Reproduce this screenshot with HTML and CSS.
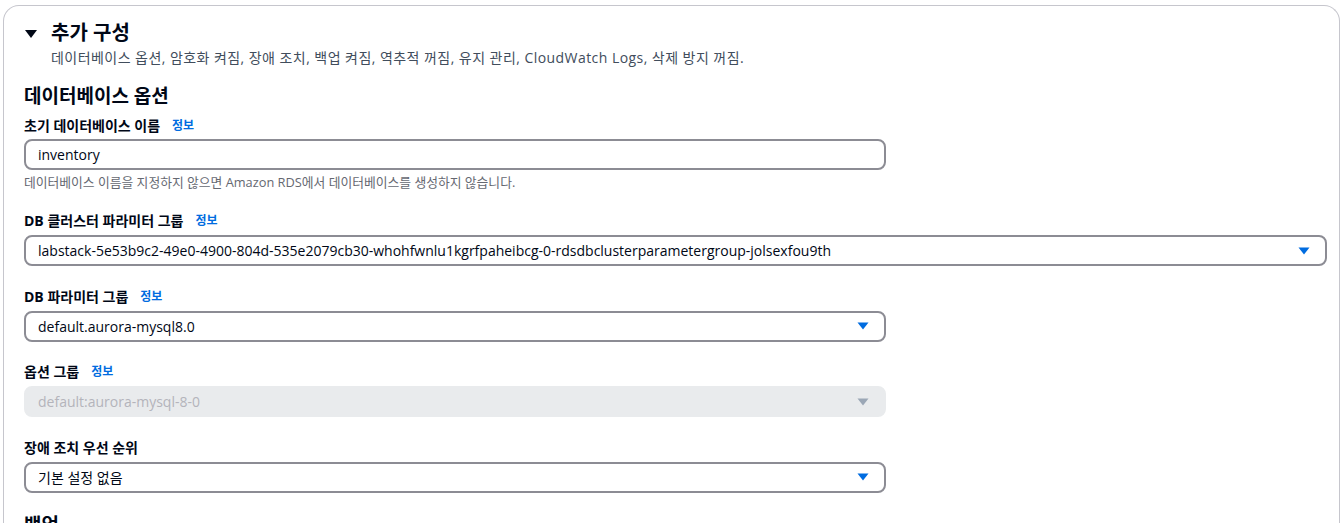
FILE: index.html
```html
<!DOCTYPE html>
<html lang="ko">
<head>
<meta charset="utf-8">
<link rel="stylesheet" href="styles.css">
</head>
<body>
<div class="page">
  <section class="card">
    <header class="exp-header">
      <span class="caret"><svg width="12" height="10" viewBox="0 0 12 10"><path d="M0 1h12L6 9z" fill="#000716"/></svg></span>
      <div>
        <h2 class="exp-title">추가 구성</h2>
        <p class="exp-desc">데이터베이스 옵션, 암호화 켜짐, 장애 조치, 백업 켜짐, 역추적 꺼짐, 유지 관리, CloudWatch Logs, 삭제 방지 꺼짐.</p>
      </div>
    </header>

    <h3 class="sec-title">데이터베이스 옵션</h3>

    <div class="field first">
      <div class="label">초기 데이터베이스 이름 <a class="info">정보</a></div>
      <div class="input narrow">inventory</div>
      <div class="hint">데이터베이스 이름을 지정하지 않으면 Amazon RDS에서 데이터베이스를 생성하지 않습니다.</div>
    </div>

    <div class="field">
      <div class="label">DB 클러스터 파라미터 그룹 <a class="info">정보</a></div>
      <div class="input select">
        <span>labstack-5e53b9c2-49e0-4900-804d-535e2079cb30-whohfwnlu1kgrfpaheibcg-0-rdsdbclusterparametergroup-jolsexfou9th</span>
        <svg class="arrow" width="12" height="8" viewBox="0 0 12 8"><path d="M0.5 0.5h11L6 7.5z" fill="#006ce0"/></svg>
      </div>
    </div>

    <div class="field">
      <div class="label">DB 파라미터 그룹 <a class="info">정보</a></div>
      <div class="input select narrow">
        <span>default.aurora-mysql8.0</span>
        <svg class="arrow" width="12" height="8" viewBox="0 0 12 8"><path d="M0.5 0.5h11L6 7.5z" fill="#006ce0"/></svg>
      </div>
    </div>

    <div class="field">
      <div class="label">옵션 그룹 <a class="info">정보</a></div>
      <div class="input select narrow disabled">
        <span>default:aurora-mysql-8-0</span>
        <svg class="arrow" width="12" height="8" viewBox="0 0 12 8"><path d="M0.5 0.5h11L6 7.5z" fill="#9ba7b6"/></svg>
      </div>
    </div>

    <div class="field">
      <div class="label">장애 조치 우선 순위</div>
      <div class="input select narrow">
        <span>기본 설정 없음</span>
        <svg class="arrow" width="12" height="8" viewBox="0 0 12 8"><path d="M0.5 0.5h11L6 7.5z" fill="#006ce0"/></svg>
      </div>
    </div>

    <h3 class="sec-title next">백업</h3>
  </section>
</div>
</body>
</html>
```

FILE: styles.css
```css
* { box-sizing: border-box; }
html, body { margin: 0; padding: 0; background: #fff; }
body {
  font-family: "Open Sans", "Noto Sans CJK KR", sans-serif;
  color: #000716;
  font-size: 14px;
  overflow: hidden;
  height: 523px;
}
.page { padding: 5px 3px 0 3px; }
.card {
  border: 1px solid #c6c6cd;
  border-bottom: none;
  border-radius: 16px 16px 0 0;
  padding: 14px 12px 0 20px;
  min-height: 560px;
}
.exp-header {
  display: flex;
  align-items: flex-start;
  gap: 14px;
}
.caret { padding-top: 9px; padding-left: 1px; display: flex; }
.exp-title {
  margin: 0;
  font-size: 20px;
  font-weight: 700;
  line-height: 26px;
}
.exp-desc {
  margin: 1px 0 0 0;
  font-size: 14px;
  letter-spacing: 0.45px;
  line-height: 22px;
  color: #414d5c;
}
.sec-title {
  margin: 14px 0 0 0;
  font-size: 19px;
  font-weight: 700;
  line-height: 26px;
}
.sec-title.next { margin-top: 18px; }
.field { margin-top: 4px; margin-bottom: 19.5px; }
.field.first { margin-top: 6px; }
.label {
  font-size: 14px;
  font-weight: 700;
  line-height: 22px;
  margin-bottom: 3px;
  display: flex;
  align-items: center;
  gap: 8px;
}
.field.first .label { margin-bottom: 2px; }
.info {
  color: #006ce0;
  font-size: 12px;
  font-weight: 700;
  margin-left: 4px;
}
.input {
  height: 31px;
  border: 2px solid #8c8c94;
  border-radius: 8px;
  padding: 0 12px;
  display: flex;
  align-items: center;
  font-size: 14px;
  color: #000716;
  background: #fff;
  justify-content: space-between;
}
.input.narrow { width: 862px; }
.select .arrow { margin-right: 3px; flex: none; }
.input.disabled {
  background: #e9ebed;
  border-color: #e9ebed;
  color: #b4b4bb;
}
.hint {
  font-size: 12.8px;
  color: #656871;
  line-height: 20px;
  margin-top: 2px;
  margin-bottom: -1.5px;
}
```
